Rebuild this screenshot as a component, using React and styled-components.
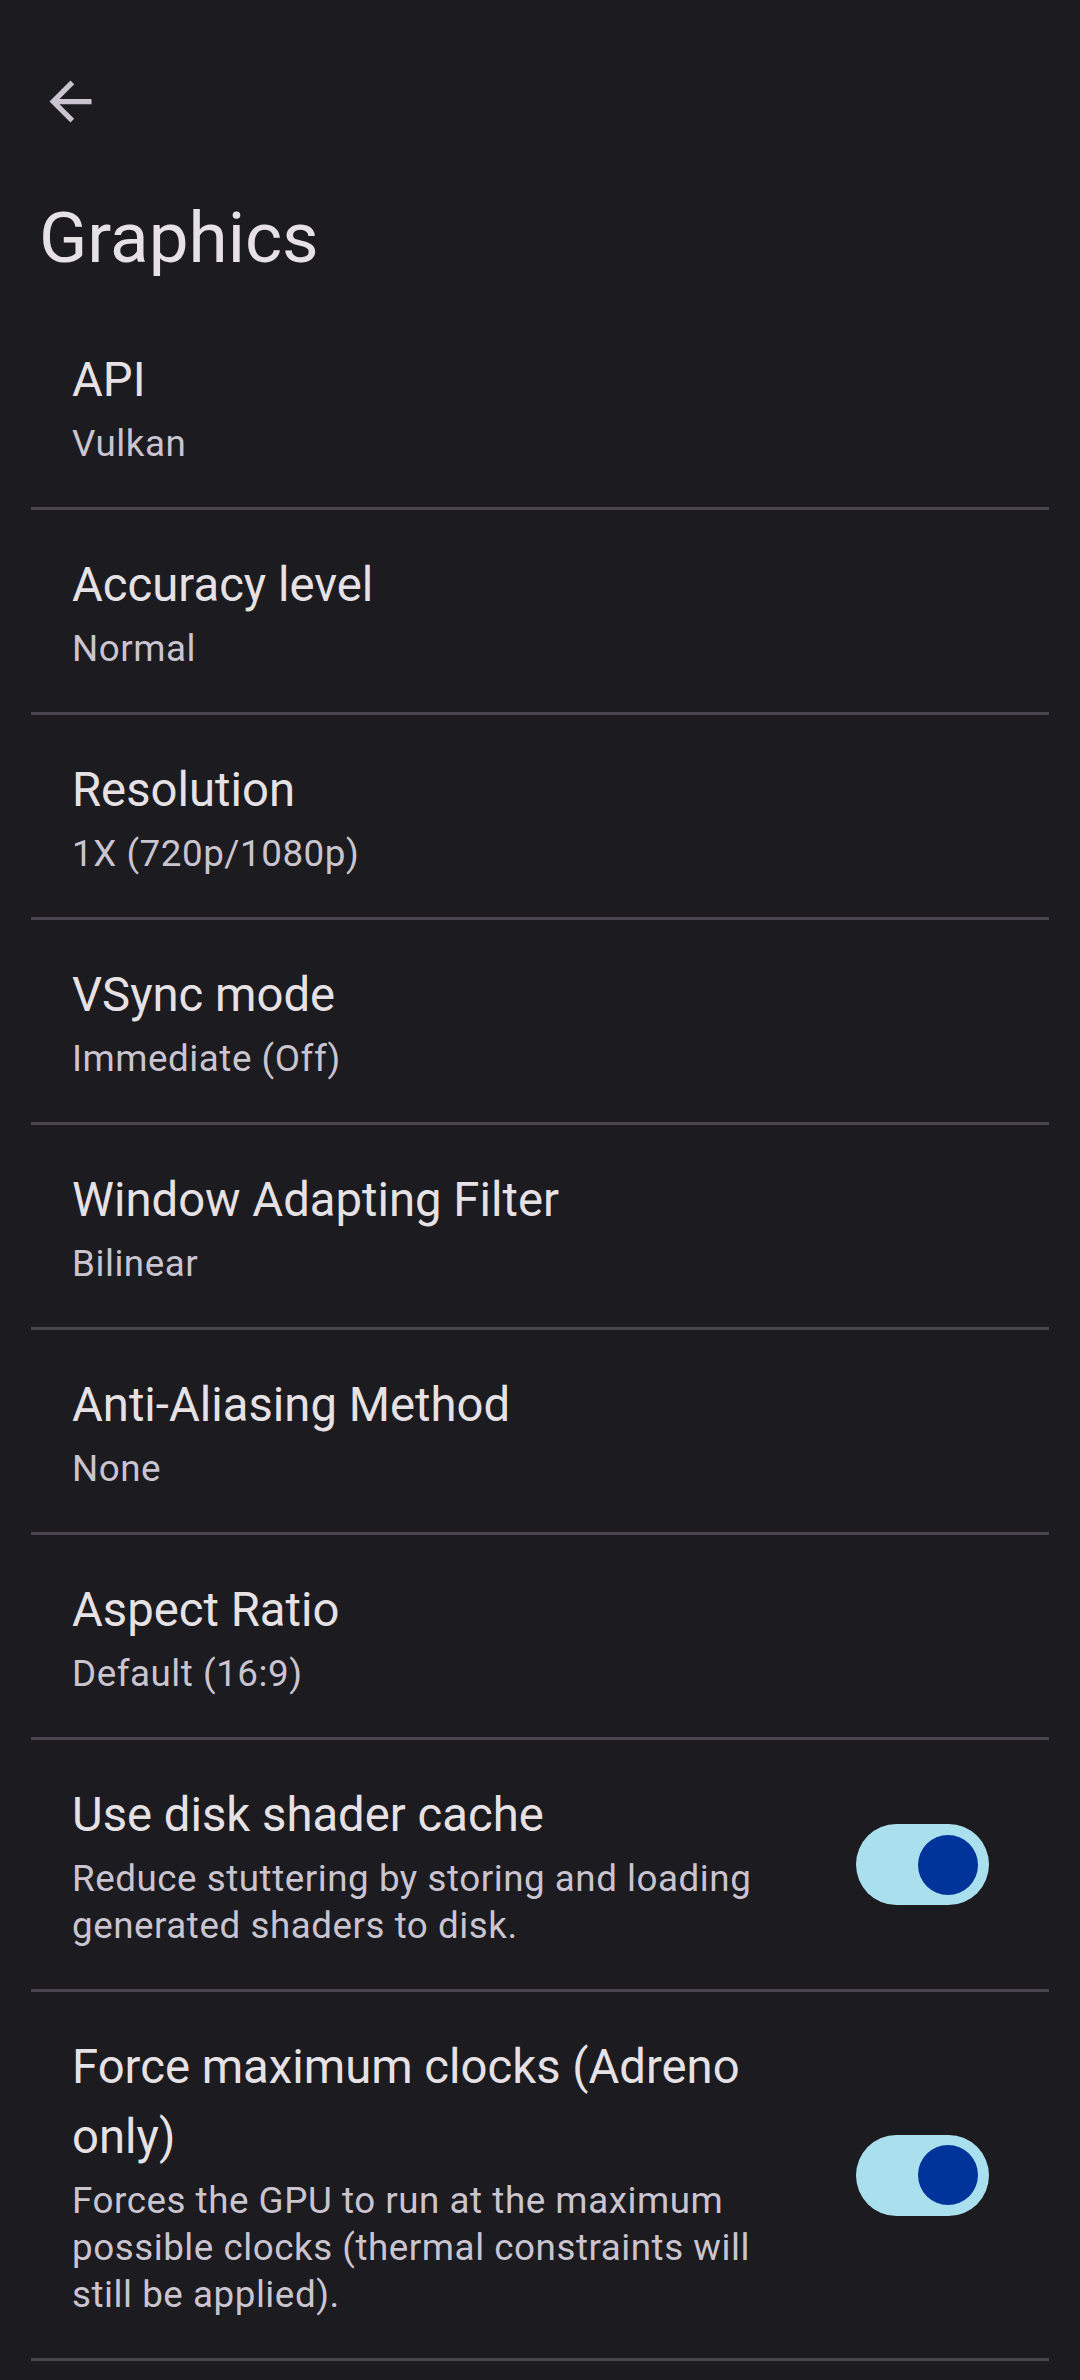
import styled, { createGlobalStyle } from "styled-components";

const GlobalStyle = createGlobalStyle`
  html, body {
    margin: 0;
    padding: 0;
    background: #1c1b1f;
  }
  body {
    font-family: Roboto, "Noto Sans", "Liberation Sans", sans-serif;
    -webkit-font-smoothing: antialiased;
  }
`;

const Page = styled.div`
  min-height: 2380px;
  background: #1c1b1f;
  padding-top: 70px;
  box-sizing: border-box;
`;

const TopBar = styled.div`
  height: 63px;
  display: flex;
  align-items: center;
  padding-left: 39px;
`;

const BackButton = styled.button`
  width: 63px;
  height: 63px;
  padding: 0;
  border: none;
  background: transparent;
  color: #cac4d0;
  display: flex;
  align-items: center;
  justify-content: center;
  cursor: pointer;
`;

const Heading = styled.h1`
  margin: 63px 0 0;
  padding-left: 39px;
  font-size: 71px;
  line-height: 84px;
  font-weight: 400;
  color: #e6e1e5;
`;

const List = styled.div`
  margin-top: 25px;
  display: flex;
  flex-direction: column;
`;

const Row = styled.div`
  margin: 0 31px;
  padding: 40px 60px 40px 41px;
  border-bottom: 3px solid #49454f;
  display: flex;
  align-items: center;
`;

const TextBlock = styled.div`
  flex: 1;
  min-width: 0;
  display: flex;
  flex-direction: column;
  gap: 5px;
`;

const Title = styled.div`
  font-size: 47.25px;
  line-height: 70px;
  letter-spacing: 0;
  color: #e6e1e5;
`;

const Subtitle = styled.div`
  font-size: 36.75px;
  line-height: 47px;
  letter-spacing: 0.54px;
  color: #cac4d0;
`;

const Track = styled.div`
  flex: none;
  margin-left: 42px;
  width: 133px;
  height: 81px;
  border-radius: 41px;
  background: ${({ on }) => (on ? "#aadfed" : "#36343b")};
  display: flex;
  align-items: center;
  justify-content: ${({ on }) => (on ? "flex-end" : "flex-start")};
  padding: 0 11px;
  box-sizing: border-box;
`;

const Thumb = styled.div`
  width: 60px;
  height: 60px;
  border-radius: 50%;
  background: #00349a;
`;

const BackArrow = () => (
  <svg width="63" height="63" viewBox="0 0 24 24" fill="currentColor">
    <path d="M20 11H7.83l5.59-5.59L12 4l-8 8 8 8 1.41-1.41L7.83 13H20v-2z" />
  </svg>
);

const settings = [
  { title: "API", value: "Vulkan" },
  { title: "Accuracy level", value: "Normal" },
  { title: "Resolution", value: "1X (720p/1080p)" },
  { title: "VSync mode", value: "Immediate (Off)" },
  { title: "Window Adapting Filter", value: "Bilinear" },
  { title: "Anti-Aliasing Method", value: "None" },
  { title: "Aspect Ratio", value: "Default (16:9)" },
  {
    title: "Use disk shader cache",
    value: "Reduce stuttering by storing and loading generated shaders to disk.",
    toggle: true,
  },
  {
    title: "Force maximum clocks (Adreno only)",
    value:
      "Forces the GPU to run at the maximum possible clocks (thermal constraints will still be applied).",
    toggle: true,
  },
];

const SettingRow = ({ title, value, toggle }) => (
  <Row>
    <TextBlock>
      <Title>{title}</Title>
      <Subtitle>{value}</Subtitle>
    </TextBlock>
    {toggle && (
      <Track on={1}>
        <Thumb />
      </Track>
    )}
  </Row>
);

export default function App() {
  return (
    <Page>
      <GlobalStyle />
      <TopBar>
        <BackButton aria-label="Back">
          <BackArrow />
        </BackButton>
      </TopBar>
      <Heading>Graphics</Heading>
      <List>
        {settings.map((s) => (
          <SettingRow key={s.title} {...s} />
        ))}
      </List>
    </Page>
  );
}
